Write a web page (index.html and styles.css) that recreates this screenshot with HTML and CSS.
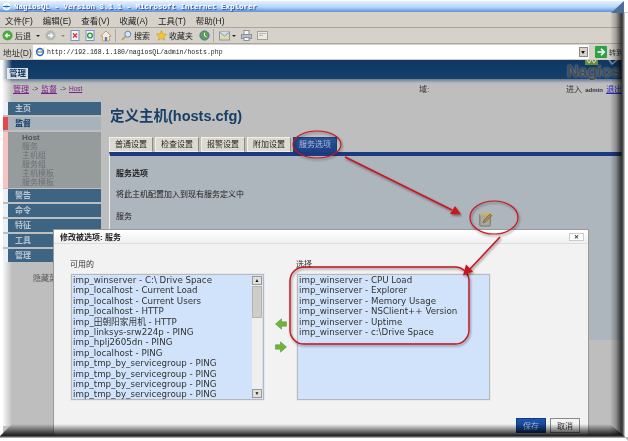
FILE: index.html
```html
<!DOCTYPE html>
<html lang="en">

<head>
    <meta charset="UTF-8">
    <title>NagiosQL - Version 3.1.1 - Microsoft Internet Explorer</title>
    <link rel="stylesheet" href="styles.css">
</head>

<body>
    <div class="shot">
        <div class="titlebar">
            <svg class="ie-small" width="9" height="9" viewBox="0 0 9 9"><circle cx="4.5" cy="4.5" r="3" fill="none" stroke="#fff" stroke-width="1.6"/><path d="M1 4.5h7" stroke="#2b62c0"/></svg>
            <span>NagiosQL - Version 3.1.1 - Microsoft Internet Explorer</span>
        </div>
        <ul class="menubar">
            <li>文件(F)</li>
            <li>编辑(E)</li>
            <li>查看(V)</li>
            <li>收藏(A)</li>
            <li>工具(T)</li>
            <li>帮助(H)</li>
        </ul>
        <div class="toolbar">
            <svg class="tool" width="11" height="11" viewBox="0 0 11 11"><circle cx="5.500" cy="5.500" r="5" fill="#49a93a"/><path d="M8 5.500H4M5.500 3.500l-2 2 2 2" fill="none" stroke="#fff" stroke-width="1.400"/></svg>
            <span class="tool-label">后退</span>
            <i class="caret"></i>
            <svg class="tool tool-gap" width="11" height="11" viewBox="0 0 11 11"><circle cx="5.500" cy="5.500" r="5" fill="#b4b8b4"/><path d="M3 5.500h4M5.500 3.500l2 2-2 2" fill="none" stroke="#fff" stroke-width="1.400"/></svg>
            <i class="caret caret-dim"></i>
            <svg class="tool tool-gap" width="10" height="11" viewBox="0 0 10 11"><rect x="1" y=".5" width="8" height="10" fill="#eef2fa" stroke="#7d93c0"/><path d="M3 3.500l4 4M7 3.500l-4 4" stroke="#d8352a" stroke-width="1.400"/></svg>
            <svg class="tool tool-gap" width="10" height="11" viewBox="0 0 10 11"><rect x="1" y=".5" width="8" height="10" fill="#eef2fa" stroke="#7d93c0"/><circle cx="5" cy="5.500" r="2.400" fill="none" stroke="#2f9a3a" stroke-width="1.400"/></svg>
            <svg class="tool tool-gap" width="12" height="12" viewBox="0 0 12 12"><path d="M6 1L.8 6h1.700v5h7V6h1.700z" fill="#f0ece0" stroke="#c68a4a" stroke-width=".8"/><rect x="4.800" y="7" width="2.400" height="4" fill="#4d82c8"/></svg>
            <i class="sep"></i>
            <svg class="tool" width="11" height="11" viewBox="0 0 11 11"><circle cx="6.800" cy="4.200" r="3" fill="#d6e6f8" stroke="#5d86b8"/><path d="M4.600 6.400L1 10" stroke="#c99a3c" stroke-width="1.600"/></svg>
            <span class="tool-label">搜索</span>
            <svg class="tool tool-star" width="11" height="11" viewBox="0 0 11 11"><path d="M5.500.5l1.500 3.400 3.600.3-2.700 2.400.8 3.600-3.200-1.900-3.200 1.900.8-3.600L.4 4.200l3.600-.3z" fill="#f4c92e" stroke="#b98e1e" stroke-width=".5"/></svg>
            <span class="tool-label">收藏夹</span>
            <svg class="tool tool-star" width="11" height="11" viewBox="0 0 11 11"><circle cx="5.500" cy="5.500" r="4.600" fill="#5f9e58" stroke="#4a6f9c"/><path d="M5.500 2.800v3l2 1" fill="none" stroke="#fff"/></svg>
            <i class="sep"></i>
            <svg class="tool" width="12" height="11" viewBox="0 0 12 11"><rect x=".5" y="2" width="10" height="8" fill="#e8d8a0" stroke="#7f99bc"/><path d="M.5 2l5 4 5-4" fill="#cfe0f4" stroke="#7f99bc"/></svg>
            <i class="caret caret-near"></i>
            <svg class="tool tool-gap" width="11" height="11" viewBox="0 0 11 11"><rect x="3" y=".5" width="5" height="4" fill="#f4f4f4" stroke="#8a8f98"/><rect x=".5" y="4.500" width="10" height="4" fill="#b9bec6" stroke="#8a8f98"/><rect x="3" y="7.500" width="5" height="3" fill="#f4f4f4" stroke="#8a8f98"/></svg>
            <svg class="tool tool-gap" width="11" height="11" viewBox="0 0 11 11"><rect x=".5" y="1.500" width="10" height="8" fill="#ece9e2" stroke="#a2a29c"/><path d="M2 3.500h7M2 5.500h4" stroke="#b5b5b0"/></svg>
        </div>
        <div class="addressbar">
            <span class="address-label">地址(D)</span>
            <div class="address-input">
                <svg width="10" height="10" viewBox="0 0 10 10"><circle cx="5" cy="5" r="3.400" fill="none" stroke="#2e6fc8" stroke-width="1.600"/><path d="M1.800 5h6.400" stroke="#2e6fc8"/><path d="M.5 7.500C3 6.500 7 3 9.500.8" fill="none" stroke="#e2b93e" stroke-width=".8"/></svg>
                <span class="url">http://192.168.1.180/nagiosQL/admin/hosts.php</span>
                <span class="combo-btn"></span>
            </div>
            <svg class="go-icon" width="12" height="12" viewBox="0 0 12 12"><rect width="12" height="12" rx="1" fill="#2fa043"/><path d="M2.500 6h6M6 2.800L9.200 6 6 9.200" fill="none" stroke="#fff" stroke-width="1.600"/></svg>
            <span class="go-label">转到</span>
        </div>

        <div class="page">
            <header class="site-header">
                <div class="site-tab">管理</div>
                <div class="logo">
                    <svg width="36" height="5" viewBox="0 0 36 5"><rect x="0" width="13" height="5" fill="#6b8a3c"/><path d="M2 0l2 3 2-3M7 0l2 3 2-3" fill="none" stroke="#dfe8cc"/><path d="M24 0l3 4 5-4" fill="none" stroke="#7a93a8" stroke-width="1.500"/></svg>
                    <span>Nagios</span>
                </div>
            </header>
            <div class="subnav">
                <div class="crumbs">
                    <a class="crumb">管理</a><span class="crumb-sep">-&gt;</span><a class="crumb">监督</a><span class="crumb-sep">-&gt;</span><a class="crumb crumb-small">Host</a>
                </div>
                <span class="domain">域:</span>
                <div class="login">进入 <b>admin</b> <a>退出</a></div>
            </div>
            <div class="columns">
                <aside class="sidebar">
                    <div class="nav-item">主页</div>
                    <div class="nav-item nav-active">监督</div>
                    <ul class="nav-sub">
                        <li class="nav-sub-current">Host</li>
                        <li>服务</li>
                        <li>主机组</li>
                        <li>服务组</li>
                        <li>主机模板</li>
                        <li>服务模板</li>
                    </ul>
                    <div class="nav-item">警告</div>
                    <div class="nav-item">命令</div>
                    <div class="nav-item">特征</div>
                    <div class="nav-item">工具</div>
                    <div class="nav-item">管理</div>
                    <div class="hide-menu">隐藏菜单</div>
                </aside>
                <main class="content">
                    <h1>定义主机(hosts.cfg)</h1>
                    <div class="tabs">
                        <div class="tab">普通设置</div>
                        <div class="tab">检查设置</div>
                        <div class="tab">报警设置</div>
                        <div class="tab">附加设置</div>
                        <div class="tab tab-active">服务选项</div>
                    </div>
                    <section class="panel">
                        <h2>服务选项</h2>
                        <p>将此主机配置加入到现有服务定义中</p>
                        <p>服务</p>
                    </section>
                </main>
            </div>
        </div>

        <svg class="edit-icon" width="14" height="15" viewBox="0 0 14 15">
            <rect x=".8" y="2" width="10.500" height="12" rx="1" fill="#a9a9a0" stroke="#77736a"/>
            <rect x=".8" y="1" width="10.500" height="2.400" fill="#c9b36a"/>
            <path d="M4 11l1-3 6-6 2 1.600-6 6z" fill="#b58a3a" stroke="#5a4a28" stroke-width=".5"/>
        </svg>

        <div class="dialog">
            <div class="dialog-title">
                <span>修改被选项: 服务</span>
                <span class="dialog-close">✕</span>
            </div>
            <div class="dialog-body">
                <div class="picker">
                    <label>可用的</label>
                    <div class="listbox">
                        <ul class="options">
                            <li>imp_winserver - C:\ Drive Space</li>
                            <li>imp_localhost - Current Load</li>
                            <li>imp_localhost - Current Users</li>
                            <li>imp_localhost - HTTP</li>
                            <li>imp_田朝阳家用机 - HTTP</li>
                            <li>imp_linksys-srw224p - PING</li>
                            <li>imp_hplj2605dn - PING</li>
                            <li>imp_localhost - PING</li>
                            <li>imp_tmp_by_servicegroup - PING</li>
                            <li>imp_tmp_by_servicegroup - PING</li>
                            <li>imp_tmp_by_servicegroup - PING</li>
                            <li>imp_tmp_by_servicegroup - PING</li>
                        </ul>
                        <div class="scrollbar">
                            <span class="scroll-btn">▲</span>
                            <span class="scroll-thumb"></span>
                            <span class="scroll-btn scroll-btn-end">▼</span>
                        </div>
                    </div>
                </div>
                <div class="movers">
                    <svg width="12" height="12" viewBox="0 0 12 12"><path d="M.5 6L6.500.8v3h5v4.400h-5v3z" fill="#6fb53a" stroke="#4f8f2a" stroke-width=".5"/></svg>
                    <svg width="12" height="12" viewBox="0 0 12 12"><path d="M11.500 6L5.500.8v3h-5v4.400h5v3z" fill="#6fb53a" stroke="#4f8f2a" stroke-width=".5"/></svg>
                </div>
                <div class="picker">
                    <label>选择</label>
                    <div class="listbox">
                        <ul class="options">
                            <li>imp_winserver - CPU Load</li>
                            <li>imp_winserver - Explorer</li>
                            <li>imp_winserver - Memory Usage</li>
                            <li>imp_winserver - NSClient++ Version</li>
                            <li>imp_winserver - Uptime</li>
                            <li>imp_winserver - c:\Drive Space</li>
                        </ul>
                    </div>
                </div>
            </div>
            <div class="dialog-actions">
                <button class="btn btn-primary">保存</button>
                <button class="btn">取消</button>
            </div>
        </div>

        <!-- red annotations drawn over the screenshot -->
        <svg class="notes" width="628" height="441" viewBox="0 0 628 441">
            <defs>
                <filter id="drop" x="-10%" y="-10%" width="120%" height="120%">
                    <feDropShadow dx="1" dy="1.500" stdDeviation="1.200" flood-color="#000" flood-opacity=".45"/>
                </filter>
            </defs>
            <g fill="none" stroke="#c8141c" stroke-width="1.200" filter="url(#drop)">
                <ellipse cx="317" cy="144.500" rx="24" ry="13.500"/>
                <ellipse cx="494" cy="217.500" rx="24" ry="16.500"/>
                <rect x="290" y="267" width="179" height="77" rx="14" stroke-width="1.400"/>
                <path d="M345 157L452 210" stroke-width="1.600"/>
                <path d="M500 237L470 269" stroke-width="1.600"/>
            </g>
            <g fill="#c8141c" filter="url(#drop)">
                <path d="M461 214.500L450 214L455 206z"/>
                <path d="M463 275.500L473 271.500L466 264.500z"/>
            </g>
        </svg>

        <div class="edge-right"></div>
        <div class="edge-left edge-left-top"></div>
        <div class="edge-left edge-left-bottom"></div>
        <div class="edge-bottom"></div>
        <div class="corner"></div>
    </div>
</body>

</html>
```

FILE: styles.css
```css
* {
    margin: 0;
    padding: 0;
    box-sizing: border-box;
    font-family: 'Liberation Sans', 'Noto Sans CJK SC', sans-serif;
}

body {
    background-color: #fff;
    overflow: hidden;
}

ul {
    list-style: none;
}

.shot {
    position: relative;
    width: 628px;
    height: 441px;
    overflow: hidden;
    padding-top: 1px;
    background-color: #fff;
    filter: blur(0.3px);
}

/* browser chrome */
.titlebar {
    display: flex;
    align-items: center;
    gap: 3px;
    height: 11px;
    margin-right: 4px;
    padding-left: 2px;
    background: linear-gradient(180deg, #e6f1fd 0%, #b6d6f8 55%, #5f8fdc 100%);
    color: #fff;
    font-size: 7.500px;
    font-weight: bold;
    text-shadow: 1px 1px 1px #23408a;
    white-space: nowrap;
}

.titlebar span {
    font-family: 'Liberation Mono', monospace;
}

.menubar {
    display: flex;
    align-items: center;
    gap: 10px;
    height: 16px;
    padding-left: 5px;
    background-color: #d6d2ca;
    border-bottom: 1px solid #a8a69f;
    font-size: 8.500px;
    color: #222;
    white-space: nowrap;
}

.toolbar {
    display: flex;
    align-items: center;
    height: 16px;
    padding-left: 2px;
    background-color: #d6d2ca;
    border-bottom: 1px solid #a8a69f;
    font-size: 8px;
    color: #222;
    white-space: nowrap;
}

.tool-label {
    margin-left: 2px;
}

.tool-gap {
    margin-left: 5px;
}

.tool-star {
    margin-left: 6px;
}

.caret {
    width: 0;
    height: 0;
    margin-left: 5px;
    border-left: 2px solid transparent;
    border-right: 2px solid transparent;
    border-top: 2px solid #222;
}

.caret-dim {
    border-top-color: #888;
}

.caret-near {
    margin-left: 1px;
}

.sep {
    width: 1px;
    height: 13px;
    margin: 0 5px 0 3px;
    background-color: #aaa79f;
}

.addressbar {
    display: flex;
    align-items: center;
    height: 16px;
    padding-left: 3px;
    background-color: #d6d2ca;
    font-size: 8px;
    color: #333;
    white-space: nowrap;
}

.address-label {
    width: 30px;
    font-size: 8.500px;
}

.address-input {
    display: flex;
    align-items: center;
    gap: 2px;
    flex: none;
    width: 556px;
    height: 14px;
    padding: 0 1px 0 2px;
    background-color: #fff;
}

.url {
    flex: 1;
    font-family: 'Liberation Mono', monospace;
    font-size: 6.500px;
    color: #222;
}

.combo-btn {
    position: relative;
    width: 9px;
    height: 10px;
    background-color: #d6d2ca;
    border: 1px solid #888;
}

.combo-btn::after {
    content: "";
    position: absolute;
    top: 3px;
    left: 1px;
    border-left: 2.500px solid transparent;
    border-right: 2.500px solid transparent;
    border-top: 3px solid #111;
}

.go-icon {
    margin-left: 6px;
    flex: none;
}

.go-label {
    margin-left: 2px;
    font-size: 7px;
}

/* nagiosql page */
.page {
    height: 381px;
    background-color: #bebebe;
}

.site-header {
    position: relative;
    display: flex;
    align-items: flex-end;
    height: 19px;
    padding-left: 7px;
    background: linear-gradient(180deg, #0f3760 0%, #15406d 100%);
    box-shadow: 0 2px 3px rgba(40, 70, 110, 0.6);
}

.site-tab {
    height: 11px;
    padding: 0 2px;
    background-color: #d8dde2;
    color: #123a63;
    font-size: 8.500px;
    line-height: 11px;
    font-weight: bold;
}

.logo {
    position: absolute;
    top: 0;
    left: 567px;
    display: flex;
    flex-direction: column;
}

.logo span {
    color: #4a4a4a;
    font-size: 16px;
    font-weight: bold;
    line-height: 14px;
    text-shadow: 0 0 2px #9ab0c4;
}

.logo svg {
    margin-left: 18px;
}

.subnav {
    display: flex;
    align-items: center;
    height: 21px;
    padding: 0 0 3px 13px;
    font-size: 8px;
}

.crumbs {
    display: flex;
    align-items: center;
    width: 406px;
}

.crumb {
    color: #7c1f8a;
    font-size: 8px;
    text-decoration: underline;
}

.crumb-small {
    font-size: 6.500px;
}

.crumb-sep {
    margin: 0 3px;
    font-size: 6.500px;
    color: #333;
}

.domain {
    width: 147px;
    color: #333;
}

.login {
    white-space: nowrap;
    color: #333;
}

.login b {
    font-size: 6px;
    margin: 0 1px;
}

.login a {
    color: #2727c8;
    text-decoration: underline;
}

.columns {
    display: flex;
    height: 340px;
}

.sidebar {
    width: 101px;
    flex: none;
    padding-top: 2px;
    background-color: #bebebe;
    border-left: 3px solid #fff;
}

.nav-item {
    height: 13px;
    margin-bottom: 2px;
    padding-left: 7px;
    background-color: #3e6483;
    border-left: 5px solid #e9f0f7;
    color: #b9c6d2;
    font-size: 8px;
    line-height: 13px;
    font-weight: bold;
}

.nav-active {
    background-color: #a7b2bb;
    border-left-color: #e5474c;
    color: #123a63;
}

.nav-sub {
    height: 56px;
    margin-bottom: 1px;
    padding: 1px 0 0 14px;
    background-color: #969b9c;
    border-left: 5px solid #f7c4c4;
    color: #6b7075;
    font-size: 8px;
    line-height: 9px;
}

.nav-sub-current {
    color: #51565c;
    font-weight: bold;
}

.hide-menu {
    margin-top: 10px;
    padding-left: 30px;
    color: #555;
    font-size: 8px;
}

.content {
    flex: 1;
    padding-left: 8px;
}

h1 {
    height: 37px;
    padding: 1px 0 0 1px;
    color: #173f67;
    font-size: 14.500px;
    line-height: 30px;
}

.tabs {
    display: flex;
    gap: 2px;
    height: 15px;
}

.tab {
    width: 44px;
    background-color: #ddd9d0;
    border: 1px solid #f2f0ea;
    border-right-color: #8c8a84;
    color: #222;
    font-size: 8px;
    line-height: 14px;
    text-align: center;
}

.tab-active {
    background: linear-gradient(180deg, #2b5296 0%, #1c3f86 100%);
    border-color: #1c3f86;
    color: #aebdd8;
}

.panel {
    height: 188px;
    padding: 13px 0 0 6px;
    background-color: #adb5bd;
    border-top: 4px solid #1b3a80;
    border-left: 1px solid #f0f0f0;
    font-size: 8px;
    color: #222;
}

.panel h2 {
    font-size: 8px;
    line-height: 10px;
    margin-bottom: 11px;
}

.panel p {
    line-height: 10px;
    margin-bottom: 12px;
}

.edit-icon {
    position: absolute;
    left: 479px;
    top: 212px;
}

/* modal dialog */
.dialog {
    position: absolute;
    left: 53px;
    top: 229px;
    display: flex;
    flex-direction: column;
    width: 536px;
    height: 207px;
    background-color: #f2f2f2;
    border: 1px solid #999;
    border-bottom: none;
}

.dialog-title {
    display: flex;
    justify-content: space-between;
    align-items: center;
    height: 14px;
    padding: 0 4px 0 6px;
    background: linear-gradient(180deg, #fff 0%, #f0f0f0 100%);
    border-bottom: 1px solid #ddd;
    font-size: 8px;
    font-weight: bold;
    color: #222;
}

.dialog-close {
    width: 15px;
    height: 8px;
    background-color: #fff;
    border: 1px solid #ccc;
    color: #333;
    font-size: 6px;
    line-height: 7px;
    text-align: center;
}

.dialog-body {
    display: flex;
    padding: 14px 0 0 16px;
}

.picker label {
    display: block;
    height: 15px;
    font-size: 8px;
    line-height: 14px;
    color: #333;
}

.listbox {
    display: flex;
    width: 195px;
    height: 128px;
    padding: 1px 2px 2px;
    background-color: #d0e3fb;
    border: 1px solid #e8e8e8;
    outline: 1px solid #b8b8b8;
    outline-offset: -2px;
}

.options {
    flex: 1;
    color: #333;
    font-size: 8.700px;
    line-height: 10.400px;
    white-space: nowrap;
}

.options li {
    font-family: 'DejaVu Sans', 'Noto Sans CJK SC', sans-serif;
}

.scrollbar {
    display: flex;
    flex-direction: column;
    width: 10px;
    margin-top: 1px;
    background-color: #efefef;
}

.scroll-btn {
    height: 9px;
    background-color: #e2e0da;
    border: 1px solid #999;
    color: #111;
    font-size: 5px;
    line-height: 7px;
    text-align: center;
}

.scroll-btn-end {
    margin-top: auto;
}

.scroll-thumb {
    height: 32px;
    margin-top: 1px;
    background-color: #cfcdc8;
    border: 1px solid #b5b3ae;
}

.movers {
    display: flex;
    flex-direction: column;
    align-items: center;
    gap: 11px;
    width: 31px;
    padding-top: 60px;
}

.dialog-actions {
    display: flex;
    justify-content: flex-end;
    gap: 4px;
    margin-top: auto;
    height: 31px;
    padding: 13px 8px 0 0;
    background-color: #f2f2f2;
}

.btn {
    width: 30px;
    height: 15px;
    background-color: #f4f4f4;
    border: 1px solid #8a8a8a;
    color: #333;
    font-size: 8px;
}

.btn-primary {
    background: linear-gradient(180deg, #1f55b0 0%, #123a80 100%);
    border-color: #123a80;
    color: #a9c0e6;
}

/* frame shadow of the cropped screenshot */
.notes {
    position: absolute;
    left: 0;
    top: 0;
}

.edge-right {
    position: absolute;
    top: 13px;
    right: 0;
    width: 18px;
    height: 424px;
    background: linear-gradient(90deg, rgba(0, 0, 0, 0) 0, rgba(0, 0, 0, 0.25) 6px, rgba(0, 0, 0, 0.7) 11px, #444 12.500px, #777 13.500px, #bbb 14.500px, #fff 15.500px);
}

.edge-left {
    position: absolute;
    left: 0;
    width: 12px;
    background: linear-gradient(90deg, #fff 0, #fff 2px, rgba(255, 255, 255, 0) 100%);
}

.edge-left-top {
    top: 60px;
    height: 42px;
}

.edge-left-bottom {
    top: 262px;
    height: 164px;
}

.edge-bottom {
    position: absolute;
    left: 0;
    bottom: 0;
    width: 628px;
    height: 17px;
    background: linear-gradient(180deg, rgba(0, 0, 0, 0) 0, rgba(0, 0, 0, 0.75) 10px, #222 11.500px, #777 13px, #fff 14.500px);
    clip-path: polygon(12px 0, 610px 0, 624px 12px, 100% 100%, 0 100%, 0 12px);
}

.corner {
    position: absolute;
    top: 1px;
    left: 611px;
    width: 13px;
    height: 12px;
    background-color: #4f6f98;
    clip-path: polygon(100% 0, 100% 100%, 0 100%);
}
```
